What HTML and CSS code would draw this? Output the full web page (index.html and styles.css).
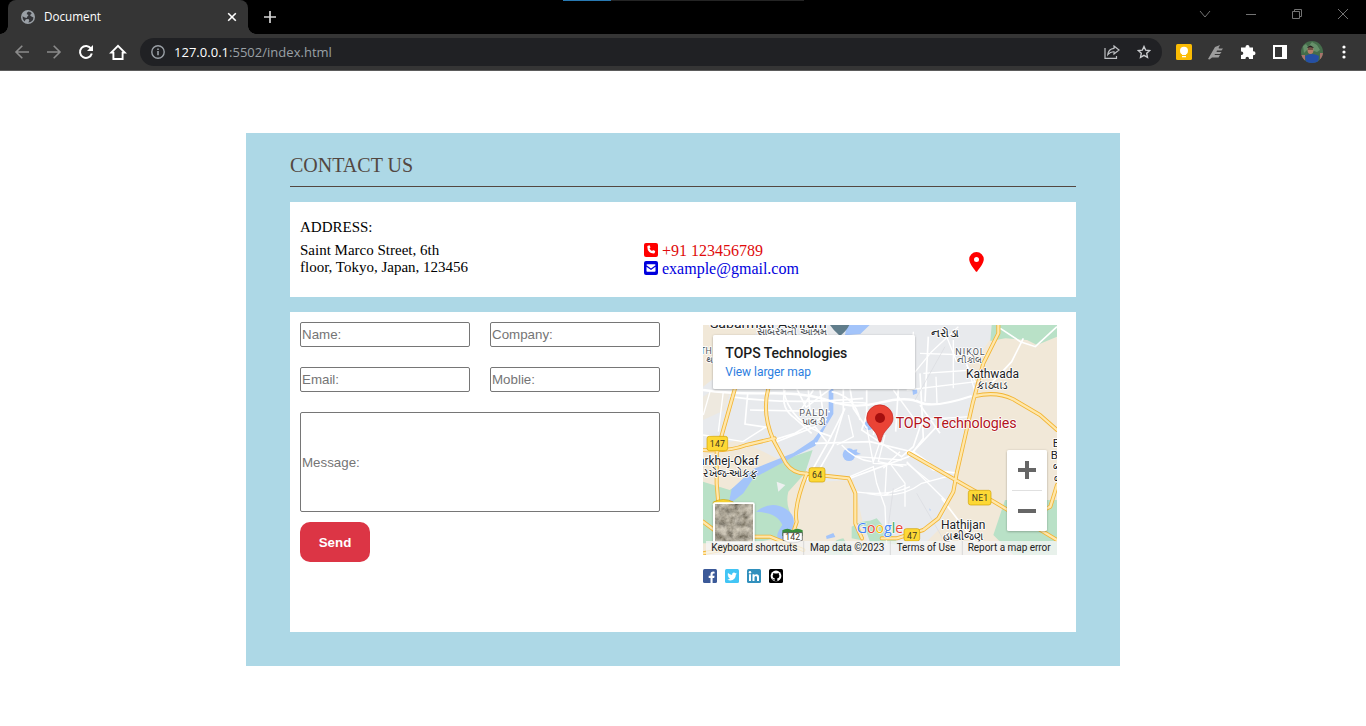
FILE: index.html
```html
<!DOCTYPE html>
<html lang="en">
<head>
<meta charset="UTF-8">
<title>Document</title>
<link rel="stylesheet" href="styles.css">
</head>
<body>
<header class="browser">
  <div class="tabstrip">
    <div class="tab">
      <svg class="globe" width="14" height="14" viewBox="0 0 14 14"><circle cx="7" cy="7" r="7" fill="#9aa0a6"/><path d="M7.500 1.600Q5.200 2.600 5.800 4.200 8 4.400 7.200 6 5.500 6.600 5.800 8 3.800 7.600 1.500 6.200 1.300 9.500 3.500 11.500L4.800 9.300 7.500 9 8.300 10.500 7.400 12.600Q12 12 12.500 7.500L10.500 6.500 9 5.200 10.800 3.200Q9.500 1.800 7.500 1.600Z" fill="#35363a"/></svg>
      <span class="tab-title">Document</span>
      <svg width="10" height="10" viewBox="0 0 10 10"><path d="m1.200 1.200 7.600 7.600m0-7.600L1.200 8.800" stroke="#fff" stroke-width="1.600"/></svg>
    </div>
    <svg class="new-tab" width="12" height="12" viewBox="0 0 12 12"><path d="M6 0v12M0 6h12" stroke="#d5d5d5" stroke-width="1.700"/></svg>
    <div class="progress"><div class="progress-done"></div></div>
    <div class="window-controls">
      <svg width="12" height="12" viewBox="0 0 12 12"><path d="m1 3 5 6 5-6"/></svg>
      <svg width="12" height="12" viewBox="0 0 12 12"><path d="M1 6.500h10"/></svg>
      <svg width="12" height="12" viewBox="0 0 12 12"><path d="M1.500 3.500h7v7h-7zM3.500 3.500v-2h7v7h-2"/></svg>
      <svg width="12" height="12" viewBox="0 0 12 12"><path d="m1 1 10 10M11 1 1 11"/></svg>
    </div>
  </div>
  <div class="toolbar">
    <div class="nav">
      <svg width="16" height="16" viewBox="0 0 16 16" fill="none" stroke="#8b8b8b" stroke-width="1.600"><path d="M15 8H2m6.300-6.300L2 8l6.300 6.300"/></svg>
      <svg width="16" height="16" viewBox="0 0 16 16" fill="none" stroke="#8b8b8b" stroke-width="1.600"><path d="M1 8h13M7.700 1.700 14 8l-6.300 6.300"/></svg>
      <svg width="16" height="16" viewBox="0 0 16 16" fill="none" stroke="#fff" stroke-width="2"><path d="M13 4.600A6 6 0 1 0 13.800 9.500"/><path d="M15 1v6H9Z" fill="#fff" stroke="none"/></svg>
      <svg width="18" height="16" viewBox="0 0 18 16" fill="none" stroke="#fff" stroke-width="1.900"><path d="M2.200 8.600 9 1.800l6.800 6.800h-2.200V15H4.400V8.600Z"/></svg>
    </div>
    <div class="omnibox">
      <svg width="14" height="14" viewBox="0 0 14 14" fill="none" stroke="#9aa0a6"><circle cx="7" cy="7" r="6.200" stroke-width="1.400"/><path d="M7 6v4.300M7 3.500v1.500" stroke-width="1.600"/></svg>
      <span class="url"><b>127.0.0.1</b>:5502/index.html</span>
      <svg class="share" width="16" height="14" viewBox="0 0 16 14" fill="none" stroke="#bfc1c4" stroke-width="1.200"><path d="M1 3v10.400h11.500V11M10 1l5 4-5 4V6.800Q6.500 6.500 3.800 9.600 4.300 4 10 3.300Z"/></svg>
      <svg width="14" height="14" viewBox="0 0 14 14" fill="none" stroke="#c9cbce" stroke-width="1.400"><path d="m7 1.500 1.700 3.700 4 .4-3 2.700.8 4L7 10.300l-3.500 2 .8-4-3-2.700 4-.4Z"/></svg>
    </div>
    <div class="extensions">
      <svg width="16" height="16" viewBox="0 0 16 16"><rect width="16" height="16" rx="1.500" fill="#fbbc04"/><circle cx="8" cy="6.700" r="4" fill="#fff"/><path d="M6 9h4v2H6zM6 12h4v1.300H6z" fill="#fff"/></svg>
      <svg width="16" height="16" viewBox="0 0 16 16"><path d="M0 15 7 3l5-2-1.500 3 .5.500h4L13.500 6.500H9l-.500 1.500h5L12 10H7l-.500 1H12l-1.500 2.500H4L1.500 15.500Z" fill="#9c9c9c"/></svg>
      <svg width="16" height="16" viewBox="0 0 16 16"><path d="M1 3.500h4.500V3a2 2 0 0 1 4 0v.5H13v3.700h.5a2 2 0 0 1 0 4H13V15H9v-.5a1.700 1.700 0 0 0-3.500 0v.5H1v-4h.5a1.800 1.800 0 0 0 0-3.600H1Z" fill="#fff"/></svg>
      <svg width="14" height="14" viewBox="0 0 14 14"><path d="M0 0h14v14H0ZM2 2v10h7V2Z" fill="#fff" fill-rule="evenodd"/></svg>
      <svg width="22" height="22" viewBox="0 0 22 22"><defs><clipPath id="avatar"><circle cx="11" cy="11" r="11"/></clipPath></defs><g clip-path="url(#avatar)"><path fill="#456d4b" d="M0 0h22v22H0z"/><path d="M2 5l3-2 2 3 4-5 5 3 3 5-3 2-9-3-4 4Z" fill="#66906a"/><path d="M0 14h4v8H0zM19 12h3v6h-3z" fill="#a8746c"/><path d="M4 15q7-4 14 0l-1 7H5Z" fill="#254fa5"/><ellipse cx="9.500" cy="9" rx="3" ry="4" fill="#b77e68"/><path d="M6 7q3-5 7 0L9 6.500Z" fill="#222"/><path d="M7 8h5" stroke="#302825"/></g></svg>
      <svg width="4" height="14" viewBox="0 0 4 14" fill="#fff"><circle cx="2" cy="2" r="1.600"/><circle cx="2" cy="7" r="1.600"/><circle cx="2" cy="12" r="1.600"/></svg>
    </div>
  </div>
</header>

<main class="card">
  <h1 class="title">CONTACT US</h1>
  <section class="details">
    <div class="address">
      <h2 class="address-label">ADDRESS:</h2>
      <p class="address-text">Saint Marco Street, 6th<br>floor, Tokyo, Japan, 123456</p>
    </div>
    <div class="contacts">
      <a class="phone"><svg width="14" height="14" viewBox="0 0 14 14"><rect width="14" height="14" rx="2" fill="currentColor"/><path d="m4 2.700 1.600-.4.900 2.200-1 .8q.8 2 2.600 2.800l.9-1 2.200.9-.4 1.700q-.2.800-1 .8Q3.500 10 3.300 3.700q0-.8.700-1Z" fill="#fff"/></svg><span>+91 123456789</span></a>
      <a class="mail"><svg width="14" height="14" viewBox="0 0 14 14"><rect width="14" height="14" rx="2" fill="currentColor"/><path d="M2.500 4.300V4q0-.8.800-.8h7.400q.8 0 .8.800v.3L7 7.500ZM2.500 5.800 7 8.900l4.500-3.100V10q0 .8-.8.800H3.300q-.8 0-.8-.8Z" fill="#fff"/></svg><span>example@gmail.com</span></a>
    </div>
    <svg class="place" width="15" height="20" viewBox="0 0 15 20"><path d="M7.500 0A7.300 7.300 0 0 0 .2 7.300C.2 11.300 5 17 6.800 19.400q.7.800 1.400 0C10 17 14.800 11.300 14.800 7.300A7.300 7.300 0 0 0 7.500 0Zm0 4.900a2.500 2.500 0 1 1 0 5 2.500 2.500 0 0 1 0-5Z" fill="red"/></svg>
  </section>
  <section class="lower">
    <form class="form">
      <input class="field" placeholder="Name:">
      <input class="field" placeholder="Company:">
      <input class="field" placeholder="Email:">
      <input class="field" placeholder="Moblie:">
      <input class="field message" placeholder="Message:">
      <button class="send" type="button">Send</button>
    </form>
    <div class="side">
      <svg class="map" width="354" height="230" viewBox="9 15 1062 690">
        <defs>
          <filter id="shadow" x="-10%" y="-10%" width="120%" height="130%"><feDropShadow dx="0" dy="2" stdDeviation="3" flood-opacity=".3"/></filter>
          <filter id="terrain" x="0" y="0" width="1" height="1"><feTurbulence type="fractalNoise" baseFrequency=".05" numOctaves="5" seed="5"/><feColorMatrix values="0.750 0.200 0 0 -0.060  0.700 0.200 0 0 -0.070  0.600 0.200 0 0 -0.090  0 0 0 0 1"/></filter>
        </defs>
        <path fill="#e8eaed" d="M9 15h1062v690H9z"/>
        <g fill="#f1e8d8">
          <path d="M9 15h170l-40 85L9 200ZM900 15h171v690H640l80-80 50-150 35-150 25-120-30-90 45-20Z"/>
          <path d="M9 380 120 360l140 70 60 30-35 245H9ZM285 490 460 480l50 225H280Z"/>
          <path d="M40 210 90 215 75 270 9 300v-70Z" opacity=".7"/>
        </g>
        <g fill="#b9e1c7">
          <path d="M875 15h196v35l-60 25-30-15-65-5-45 8Z"/>
          <path d="m338 390-23 70-50 55q-10 40 12 75l-30 60-90 20H9V485l80 25 130-80Z"/>
          <path d="M455 620q30-20 70-18l-45 18v40l-25-5ZM915 540h156v165H940l-60-60ZM490 610l40-15 70 80-90-10Z"/>
          <path d="M380 705q10-45 50-50l30 50Z"/>
        </g>
        <g fill="#a3c4fa">
          <path d="M386 200h14v82l-24 40-30 55-60 30-126 68-30 45-45 35 10-48 65-60 120-48 60-40 34-45 12-44Z"/>
          <path d="M168 575q45-35 90-8 30 20 22 50-8 45-45 40-10-12 12-42-15-38-79-40Z"/>
          <circle cx="447" cy="404" r="19"/><circle cx="506" cy="316" r="14"/><path d="m459 390 13-2-2 8 13 6-18 4ZM637 208l14-1 1 13-13 5ZM440 15h69l-28 27-46 4ZM378 648l22-9 6 12-26 6ZM688 565l4 4-2 5Z"/>
        </g>
        <path d="m230 485 26 10-21 20Z" fill="#edf0f0"/>
        <g fill="none" stroke="#fff" stroke-width="5">
          <path d="M9 210Q90 222 205 220T390 243 540 248 660 247 815 228" stroke-width="7"/>
          <path d="M90 230q170 25 400 5M143 222l-8 90 65 10M150 270l240 5M250 205q15 105 145 145"/>
          <path d="M255 210q-15 55 30 85l50 45M290 205l28 57 75-57M325 210l5 65 50 25M340 210l-40 65M360 210l10 75M430 205v70l-30 100-40 70M450 205l10 60 40 60M395 215q70 15 85 85"/>
          <path d="M405 250q75-5 95 0v50M500 210v75l-15 45 30 20 90 60 35-30 25-75M540 245l-20 100M595 205l-8 130M660 160l5 95 5 100-30 40M685 50l-10 195"/>
          <path d="M640 35l-5 165M605 205l90-110 80-75M660 100l150 5M670 160l150-10M620 210l210-25M708 170l3 80M760 60v145M800 130l25 85M580 210l65 90 165-10" stroke-width="4"/>
          <path d="M345 370l165-5 125 30 65 55 75 10M205 365l80-25 85-50M230 365l115-45 35 45M320 480l65-115 50-100M450 475l175-65 85-90M660 255l60 85"/>
          <path d="M410 375l50-25-15-65M425 375q40 45 90 50M470 410l135 10M500 320l20 110 100 5M555 345l-20 80 75 15M540 365l-20 60M600 395l-50 50M620 430l70 55" stroke-width="4"/>
          <path d="M450 470l70-30 10 50 25 70 5 115M500 520q100 20 165-30l75-20M560 435l-5 90 60-30M570 430l45 60v70M620 425l125 125M640 395l50 35M460 515q110 15 170-15" stroke-width="4"/>
          <path d="M970 55l-35 70-70 75M1071 20l-65 60-45-15-60-40M725 535l125 165"/>
          <path d="M30 215l-20 70M70 215l-15 120M9 345l120 20 70-45M730 25l40 100M825 185l-25-50" stroke-width="4"/>
        </g>
        <g fill="none" stroke="#d9dbe0" stroke-width="2"><path d="M650 520l90 155M580 505l-20 150M735 80l-90 160"/></g>
        <g fill="none" stroke="#f2b535" stroke-width="12" stroke-linejoin="round" stroke-linecap="round"><path d="M205 205q-20 75 15 155l38 70q20 30 60 31l128 14 20 45v90l20 45M105 205L50 400v90l5 60M9 390q80 5 130-15l85-20"/><path d="M895 15v25l-45 90-32 120-48 210-10 55-45 80-45 35-80 25h-45M320 461q-40 100-30 145l-10 30M627 400l175 100 80 45 189 115M825 228q65-15 115 10l80 47 51 45M160 650h50l100 40M9 605l40 30M1071 495l-20 65-20 10M9 700l105-20"/></g>
        <g fill="none" stroke="#ffe7ab" stroke-width="7" stroke-linejoin="round" stroke-linecap="round"><path d="M205 205q-20 75 15 155l38 70q20 30 60 31l128 14 20 45v90l20 45M105 205L50 400v90l5 60M9 390q80 5 130-15l85-20"/><path d="M895 15v25l-45 90-32 120-48 210-10 55-45 80-45 35-80 25h-45M320 461q-40 100-30 145l-10 30M627 400l175 100 80 45 189 115M825 228q65-15 115 10l80 47 51 45M160 650h50l100 40M9 605l40 30M1071 495l-20 65-20 10M9 700l105-20"/></g>
        <path d="M390 15h58q-8 17-28 33-20-17-30-33Z" fill="#607d8b"/>
        <g class="places">
          <text x="30" y="24" font-size="38" textLength="350" lengthAdjust="spacingAndGlyphs">Sabarmati Ashram</text>
          <text x="170" y="46" font-size="28" textLength="210" lengthAdjust="spacingAndGlyphs" class="minor">સાબરમતી આશ્રમ</text>
          <text x="692" y="50" font-size="34" textLength="87" lengthAdjust="spacingAndGlyphs">નરોડા</text>
          <text x="766" y="105" font-size="27" textLength="88" class="minor">NIKOL</text>
          <text x="771" y="130" font-size="27" textLength="75" lengthAdjust="spacingAndGlyphs" class="minor">નીકોલ</text>
          <text x="798" y="175" font-size="36" textLength="159">Kathwada</text>
          <text x="832" y="208" font-size="32" textLength="92" lengthAdjust="spacingAndGlyphs">કાઠવાડ</text>
          <text x="298" y="288" font-size="27" textLength="85" class="minor">PALDI</text>
          <text x="305" y="314" font-size="27" textLength="73" lengthAdjust="spacingAndGlyphs" class="minor">પાલડી</text>
          <text x="-6" y="435" font-size="36" textLength="182">arkhej-Okaf</text>
          <text x="9" y="470" font-size="33" textLength="163" lengthAdjust="spacingAndGlyphs">રખેજ-ઓકફ</text>
          <text x="723" y="627" font-size="36" textLength="133">Hathijan</text>
          <text x="728" y="660" font-size="32" textLength="122" lengthAdjust="spacingAndGlyphs">હાથીજણ</text>
          <text x="1" y="103" font-size="26" class="minor">TH</text>
          <text x="19" y="128" font-size="26" class="minor">થ</text>
          <text x="1058" y="381" font-size="34">B</text><text x="1052" y="416" font-size="34">B</text><text x="1058" y="450" font-size="28">બ</text><text x="1062" y="485" font-size="28">બ</text>
          <text x="587" y="324" font-size="43" textLength="363" class="pin-name">TOPS Technologies</text>
        </g>
        <g class="routes">
          <g fill="#fdd835" stroke="#d0a000" stroke-width="2"><rect x="21" y="349" width="62" height="43" rx="7"/><rect x="327" y="443" width="48" height="43" rx="7"/><rect x="805" y="511" width="68" height="44" rx="7"/><rect x="612" y="626" width="47" height="37" rx="7"/><path d="M40 546q30-15 60 0v8H40Z"/></g>
          <path d="M247 631q15-9 30 0 15-9 31 0v17h-61Z" fill="#388e3c"/><path d="M249 638h58v23q-28 15-58 0Z" fill="#fff" stroke="#444" stroke-width="2"/>
          <text x="52" y="381" textLength="45">147</text><text x="351" y="474" textLength="30">64</text><text x="840" y="543" textLength="49">NE1</text><text x="636" y="657" textLength="30">47</text><text x="278" y="660" textLength="44">142</text>
        </g>
        <path d="M540 367c-4 0-5-18-15-31-14-18-25-25-25-42a39 39 0 0 1 79 0c0 17-11 24-25 42-10 13-10 31-14 31Z" fill="#ea4335" stroke="#c5221f" stroke-width="2"/><circle cx="540" cy="294" r="15" fill="#a50e0e"/>
        <g class="google"><text x="470" y="640" textLength="140" lengthAdjust="spacingAndGlyphs"><tspan fill="#4285f4">G</tspan><tspan fill="#ea4335">o</tspan><tspan fill="#fbbc04">o</tspan><tspan fill="#4285f4">g</tspan><tspan fill="#34a853">l</tspan><tspan fill="#ea4335">e</tspan></text></g>
        <g filter="url(#shadow)"><rect x="39" y="45" width="606" height="162" rx="5" fill="#fff"/><rect x="921" y="390" width="120" height="243" rx="5" fill="#fff"/><rect x="39" y="547" width="125" height="125" rx="6" fill="#fff"/></g>
        <rect x="45" y="553" width="114" height="113" filter="url(#terrain)"/>
        <text x="76" y="114" class="map-title" textLength="366">TOPS Technologies</text>
        <text x="76" y="168" class="map-link" textLength="257">View larger map</text>
        <path d="M936 511.500h90" stroke="#e0e0e0" stroke-width="3"/><path d="M981 423v54M954 450h54M954 573h54" stroke="#666" stroke-width="12"/>
        <path d="M18 663h1053v42H18Z" fill="#f5f5f5" opacity=".78"/>
        <path d="M311 663v42M571 663v42M787 663v42" stroke="#ccc" stroke-width="2"/>
        <g class="legal"><text x="34" y="693" textLength="258">Keyboard shortcuts</text><text x="330" y="693" textLength="223">Map data ©2023</text><text x="590" y="693" textLength="176">Terms of Use</text><text x="803" y="693" textLength="249">Report a map error</text></g>
      </svg>
      <div class="social">
        <svg width="14" height="14" viewBox="0 0 14 14"><rect width="14" height="14" rx="1.500" fill="#3b5998"/><path d="M7.500 14V9H5.700V6.800h1.800V5.300q0-2.700 2.700-2.700l1.400.1v1.900h-.9q-1.100 0-1.100 1.100v1.100h2L11.200 9H9.600v5Z" fill="#fff"/></svg>
        <svg width="14" height="14" viewBox="0 0 14 14"><rect width="14" height="14" rx="1.500" fill="#42c5f5"/><path d="M11.900 4.400q-.5.300-1.100.3.600-.4.800-1-.5.300-1.200.5a1.900 1.900 0 0 0-3.300 1.700Q4.700 5.800 3 4q-.9 1.700.6 2.600l-.9-.3q0 1.600 1.600 1.900l-.9.100q.5 1.200 1.800 1.300-1.200 1-2.900.9 1.500.9 3 .9 5.300-.200 5.600-5.900.600-.400 1-1.100Z" fill="#fff"/></svg>
        <svg width="14" height="14" viewBox="0 0 14 14"><rect width="14" height="14" rx="1.500" fill="#3190bd"/><path d="M2 5.300h2V12H2ZM5.500 5.300h2v.9q.7-1 2-1Q12 5.200 12 8v4h-2V8.500Q10 7 8.900 7 7.500 7 7.500 8.500V12h-2Z" fill="#fff"/><circle cx="3" cy="3.200" r="1.200" fill="#fff"/></svg>
        <svg width="14" height="14" viewBox="0 0 14 14"><rect width="14" height="14" rx="1.500"/><circle cx="7" cy="7" r="5.400" fill="#fff"/><path d="M5.600 12.600v-1.500q-1.700.3-2.200-.8l-.7-.9q.8-.1 1.400.8.600.6 1.600.3l.4-.8Q3.600 9.300 3.600 7q0-.9.600-1.500-.2-.8.100-1.500.7 0 1.600.6 1.100-.3 2.200 0 .9-.6 1.600-.6.300.7.100 1.500.6.600.6 1.500 0 2.300-2.500 2.700.5.400.5 1.200v1.700Z"/></svg>
      </div>
    </div>
  </section>
</main>
</body>
</html>
```
FILE: styles.css
```css
* { box-sizing: border-box; }
body { margin: 0; height: 726px; overflow: hidden; background: #fff; font-family: "Liberation Serif", serif; }
svg { display: block; flex: none; }

.browser { height: 71px; font-family: "Open Sans", sans-serif; border-bottom: 1px solid #5b5b5b; background: #353535; }
.tabstrip { position: relative; display: flex; align-items: flex-start; height: 34px; background: #000; padding-left: 8px; }
.tab { position: relative; display: flex; align-items: center; width: 240px; height: 34px; padding: 0 11px 0 13px; border-radius: 8px 8px 0 0; background: #353535; color: #fff; font-size: 11.7px; }
.tab::before, .tab::after { content: ""; position: absolute; bottom: 0; width: 8px; height: 8px; }
.tab::before { left: -8px; background: radial-gradient(circle at 0 0, #000 7.5px, #353535 8px); }
.tab::after { right: -8px; background: radial-gradient(circle at 100% 0, #000 7.5px, #353535 8px); }
.tab-title { flex: 1; margin: -2px 0 0 9px; }
.new-tab { margin: 11px 0 0 16px; }
.progress { position: absolute; left: 563px; top: 0; width: 241px; height: 1px; background: #242424; }
.progress-done { width: 48px; height: 1px; background: #2879b2; }
.window-controls { display: flex; gap: 34px; margin: 8px 17px 0 auto; fill: none; stroke: #737373; }
.toolbar { display: flex; align-items: center; height: 36px; }
.nav { display: flex; align-items: center; gap: 16px; width: 140px; padding-left: 14px; }
.nav svg:last-child { margin-left: -1px; }
.omnibox { display: flex; align-items: center; width: 1022px; height: 28px; padding: 0 11px; border-radius: 14px; background: #202124; color: #9aa0a6; font-size: 13px; }
.url { margin-left: 9px; letter-spacing: .02px; }
.url b { font-weight: 400; color: #fff; }
.share { margin: 0 17px 0 auto; }
.extensions { display: flex; align-items: center; gap: 16px; padding-left: 14px; }
.extensions svg:nth-child(4) { margin-left: 1px; }
.extensions svg:nth-child(5) { margin-left: -2px; }
.extensions svg:last-child { margin-left: 3px; }

.card { width: 874px; height: 533px; margin: 62px auto 0; padding: 20px 44px 0; background: #add8e6; }
.title { height: 34px; margin: 0 0 15px; border-bottom: 1px solid #534741; color: #534741; font-size: 20px; line-height: 24px; font-weight: 400; }
.details { display: flex; height: 95px; background: #fff; }
.address { width: 354px; padding: 17px 10px; }
.address-label { margin: 0 0 6px; font-size: 15px; line-height: 17px; font-weight: 400; }
.address-text { margin: 0; font-size: 15px; line-height: 17px; }
.contacts { width: 325px; padding-top: 40px; font-size: 16px; }
.contacts a { display: flex; align-items: center; gap: 4px; height: 18px; line-height: 18px; }
.contacts svg { margin-top: -2px; }
.phone { color: #f00; }
.phone span { color: #e00b0b; }
.mail { color: #00d; }
.place { margin-top: 50px; }
.lower { display: flex; gap: 43px; height: 320px; margin-top: 15px; padding: 10px; background: #fff; }
.form { display: grid; grid-template: 25px 45px 120px 50px / 170px 170px; column-gap: 20px; width: 360px; align-content: start; }
.field { width: 100%; height: 25px; margin: 0; padding: 1px; border: 1px solid #767676; border-radius: 2px; font: 13.333px "Liberation Sans", sans-serif; outline: 0; }
.field::placeholder { color: #757575; }
.field:nth-child(3), .field:nth-child(4), .message { margin-top: 20px; }
.message { grid-column: span 2; height: 100px; }
.send { width: 70px; height: 40px; margin-top: 10px; border: 0; border-radius: 10px; background: #dc3545; color: #fff; font: bold 13.333px "Liberation Sans", sans-serif; }
.side { padding-top: 3px; }
.map { font-family: Roboto, "Noto Sans", sans-serif; }
.places text { fill: #202124; stroke: #fff; stroke-width: 5px; paint-order: stroke; stroke-linejoin: round; }
.places .minor { fill: #52565b; }
.places .pin-name { fill: #b3151c; }
.routes text { fill: #3c3522; font-size: 26px; text-anchor: middle; }
.google { font: 500 46px "Open Sans", sans-serif; stroke: #fff; stroke-width: 3px; paint-order: stroke; }
.map-title { font-size: 42px; font-weight: 500; fill: #1b1b1b; }
.map-link { font-size: 36px; fill: #2b7de0; }
.legal { font-size: 30px; fill: #222; }
.social { display: flex; gap: 8px; margin-top: 14px; }
```
